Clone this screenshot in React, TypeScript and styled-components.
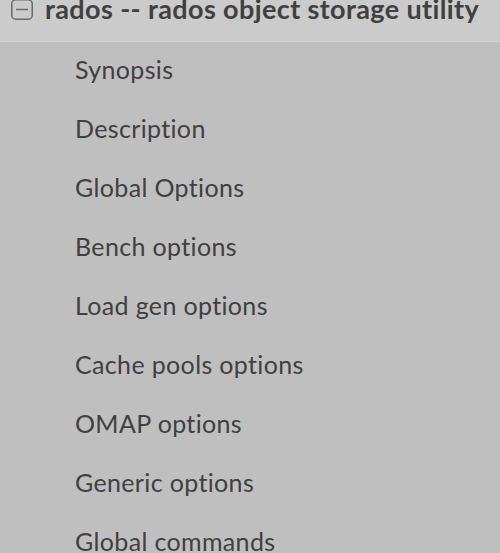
import React from "react";
import styled, { createGlobalStyle } from "styled-components";

const sections: string[] = [
  "Synopsis",
  "Description",
  "Global Options",
  "Bench options",
  "Load gen options",
  "Cache pools options",
  "OMAP options",
  "Generic options",
  "Global commands",
];

const GlobalStyle = createGlobalStyle`
  html, body {
    margin: 0;
    padding: 0;
    background: #bfbfbf;
    overflow: hidden;
  }
`;

const Nav = styled.nav`
  width: 500px;
  height: 553px;
  overflow: hidden;
  font-family: Lato, "Open Sans", sans-serif;
  color: #404040;
  background: #bfbfbf;
`;

const Header = styled.div`
  display: flex;
  align-items: flex-start;
  gap: 12px;
  margin-top: -2px;
  height: 44px;
  padding-left: 11px;
  box-sizing: border-box;
  background: #cbcbcb;
  border-bottom: 1px solid #d2d2d2;
`;

const Toggle = styled.svg`
  flex: none;
  margin-top: 1px;
`;

const Title = styled.span`
  font-size: 27px;
  line-height: 21px;
  font-weight: 700;
  letter-spacing: 0.38px;
  white-space: nowrap;
`;

const List = styled.ul`
  list-style: none;
  margin: 0;
  padding: 0;
`;

const Item = styled.li`
  height: 59px;
  box-sizing: border-box;
  padding: 15px 0 0 75px;
  font-size: 25px;
  line-height: 24px;
  letter-spacing: 0.35px;
  white-space: nowrap;
`;

export default function App(): JSX.Element {
  return (
    <Nav>
      <GlobalStyle />
      <Header>
        <Toggle width="22" height="21" viewBox="0 0 22 21">
          <rect x="0.75" y="0.75" width="20.5" height="19.5" rx="4" fill="none" stroke="#6a6a6a" strokeWidth="1.5" />
          <line x1="5" y1="10.5" x2="17" y2="10.5" stroke="#6a6a6a" strokeWidth="1.5" />
        </Toggle>
        <Title>rados -- rados object storage utility</Title>
      </Header>
      <List>
        {sections.map((s) => (
          <Item key={s}>{s}</Item>
        ))}
      </List>
    </Nav>
  );
}
